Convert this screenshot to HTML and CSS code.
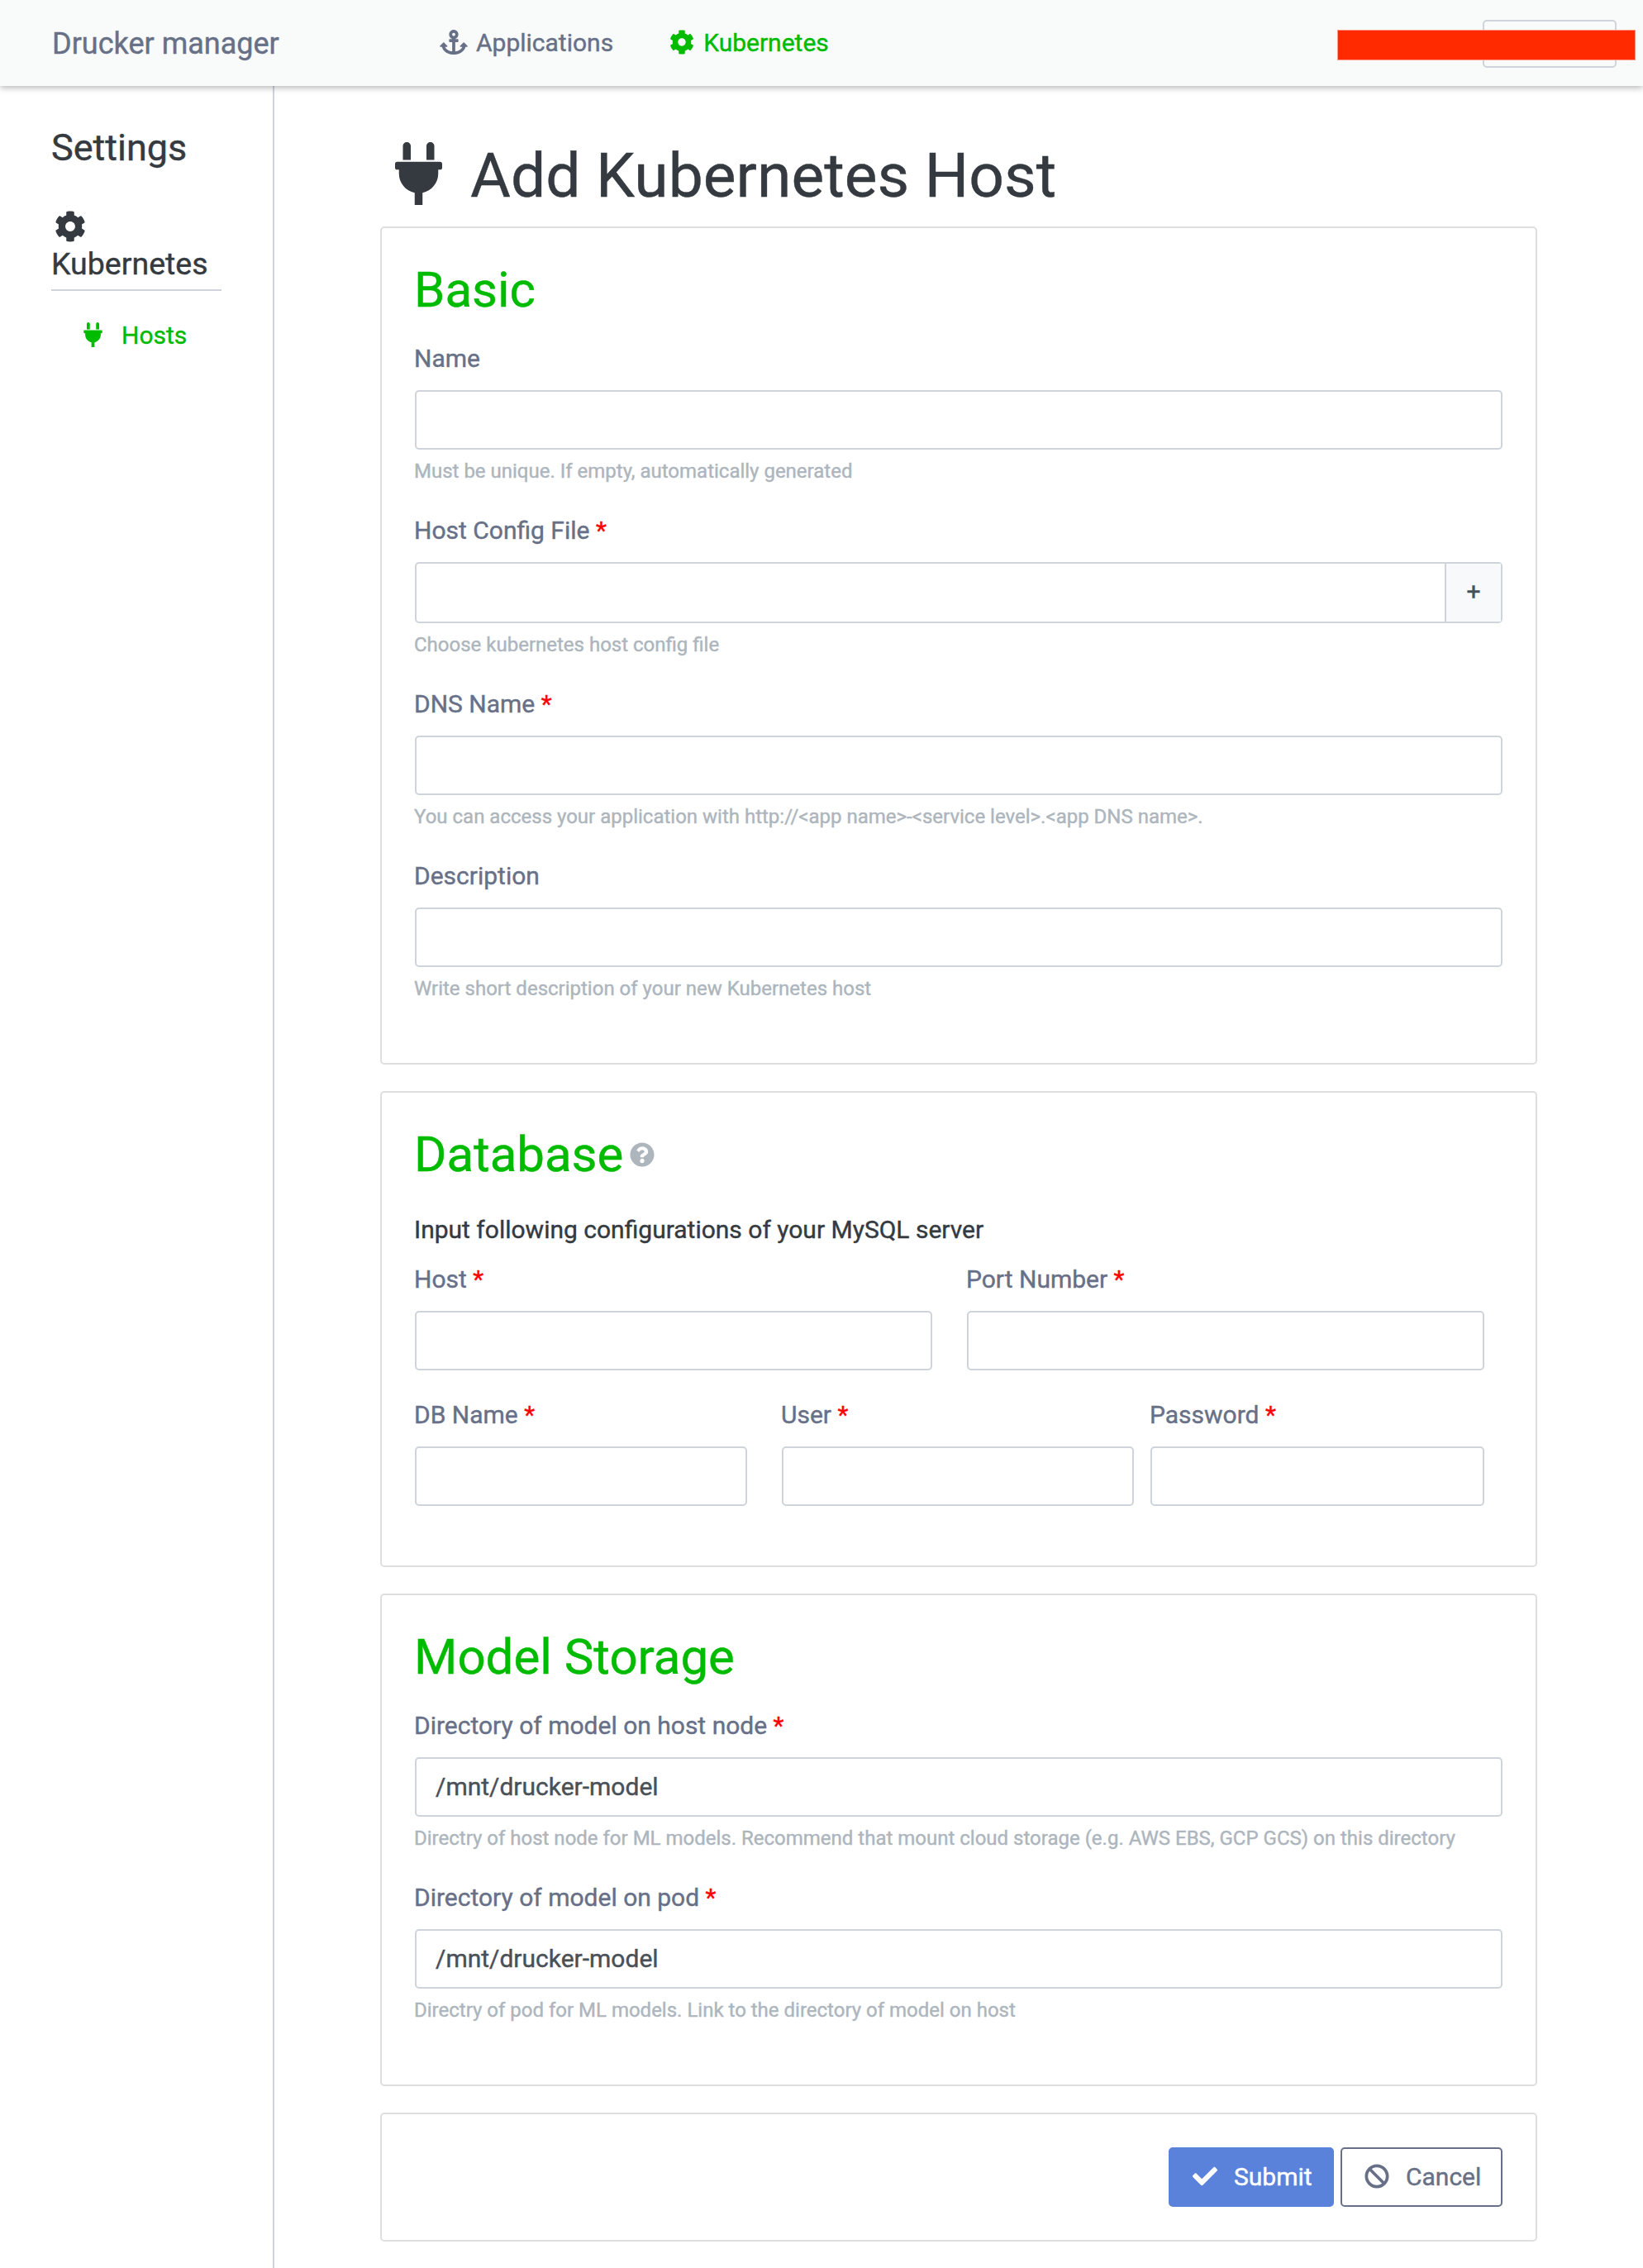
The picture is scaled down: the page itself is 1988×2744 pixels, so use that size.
FILE: index.html
```html
<!DOCTYPE html>
<html lang="en">
<head>
<meta charset="utf-8">
<title>Drucker manager</title>
<link rel="stylesheet" href="styles.css">
</head>
<body>
<svg class="sprite" aria-hidden="true">
  <symbol id="plug" viewBox="0 0 384 512"><path d="M256 144V32c0-17.673 14.327-32 32-32s32 14.327 32 32v112h-64zm112 16H16c-8.837 0-16 7.163-16 16v32c0 8.837 7.163 16 16 16h16v32c0 77.406 54.969 141.971 128 156.796V512h64v-99.204c73.031-14.825 128-79.39 128-156.796v-32h16c8.837 0 16-7.163 16-16v-32c0-8.837-7.163-16-16-16zm-240-16V32c0-17.673-14.327-32-32-32S64 14.327 64 32v112h64z"/></symbol>
  <symbol id="cog" viewBox="0 0 512 512"><path d="M444.788 291.1l42.616 24.599c4.867 2.809 7.126 8.618 5.459 13.985-11.07 35.642-29.97 67.842-54.689 94.586a12.016 12.016 0 0 1-14.832 2.254l-42.584-24.595a191.577 191.577 0 0 1-60.759 35.13v49.182a12.01 12.01 0 0 1-9.377 11.718c-34.956 7.85-72.499 8.256-109.219.007-5.49-1.233-9.403-6.096-9.403-11.723v-49.184a191.555 191.555 0 0 1-60.759-35.13l-42.584 24.595a12.016 12.016 0 0 1-14.832-2.254c-24.718-26.744-43.619-58.944-54.689-94.586-1.667-5.366.592-11.175 5.459-13.985L67.212 291.1a193.48 193.48 0 0 1 0-70.199l-42.616-24.599c-4.867-2.809-7.126-8.618-5.459-13.985 11.07-35.642 29.97-67.842 54.689-94.586a12.016 12.016 0 0 1 14.832-2.254l42.584 24.595a191.577 191.577 0 0 1 60.759-35.13V25.759a12.01 12.01 0 0 1 9.377-11.718c34.956-7.85 72.499-8.256 109.219-.007 5.49 1.233 9.403 6.096 9.403 11.723v49.184a191.555 191.555 0 0 1 60.759 35.13l42.584-24.595a12.016 12.016 0 0 1 14.832 2.254c24.718 26.744 43.619 58.944 54.689 94.586 1.667 5.366-.592 11.175-5.459 13.985L444.788 220.9a193.485 193.485 0 0 1 0 70.2zM336 256c0-44.112-35.888-80-80-80s-80 35.888-80 80 35.888 80 80 80 80-35.888 80-80z"/></symbol>
  <symbol id="anchor" viewBox="0 0 576 512"><path d="M12.971 352h32.394C67.172 454.735 181.944 512 288 512c106.229 0 220.853-57.38 242.635-160h32.394c10.691 0 16.045-12.926 8.485-20.485l-67.029-67.029c-4.686-4.686-12.284-4.686-16.971 0l-67.029 67.029c-7.56 7.56-2.206 20.485 8.485 20.485h35.146c-20.29 54.317-84.963 86.588-144.117 94.015V256h52c6.627 0 12-5.373 12-12v-40c0-6.627-5.373-12-12-12h-52v-5.47c37.281-13.226 63.995-48.725 64-90.5C384.005 43.772 341.605.738 289.37.01 235.723-.739 192 42.525 192 96c0 41.798 26.716 77.312 64 90.53V192h-52c-6.627 0-12 5.373-12 12v40c0 6.627 5.373 12 12 12h52v190.015c-58.936-7.399-123.82-39.679-144.117-94.015h35.146c10.691 0 16.045-12.926 8.485-20.485l-67.029-67.029c-4.686-4.686-12.284-4.686-16.971 0L4.485 331.515C-3.074 339.074 2.28 352 12.971 352zM288 64c17.645 0 32 14.355 32 32s-14.355 32-32 32-32-14.355-32-32 14.355-32 32-32z"/></symbol>
  <symbol id="check" viewBox="0 0 512 512"><path d="M173.898 439.404l-166.4-166.4c-9.997-9.997-9.997-26.206 0-36.204l36.203-36.204c9.997-9.998 26.207-9.998 36.204 0L192 312.69 432.095 72.596c9.997-9.997 26.207-9.997 36.204 0l36.203 36.204c9.997 9.997 9.997 26.206 0 36.204l-294.4 294.401c-9.998 9.997-26.207 9.997-36.204-.001z"/></symbol>
  <symbol id="ban" viewBox="0 0 512 512"><path d="M256 8C119.034 8 8 119.033 8 256s111.034 248 248 248 248-111.034 248-248S392.967 8 256 8zm130.108 117.892c65.448 65.448 70 165.481 20.677 235.637L150.47 105.216c70.204-49.356 170.226-44.735 235.638 20.676zM125.892 386.108c-65.448-65.448-70-165.481-20.677-235.637L361.53 406.784c-70.203 49.356-170.226 44.736-235.638-20.676z"/></symbol>
  <symbol id="question" viewBox="0 0 512 512"><path d="M504 256c0 136.997-111.043 248-248 248S8 392.997 8 256C8 119.083 119.043 8 256 8s248 111.083 248 248zM262.655 90c-54.497 0-89.255 22.957-116.549 63.758-3.536 5.286-2.353 12.415 2.715 16.258l34.699 26.31c5.205 3.947 12.621 3.008 16.665-2.122 17.864-22.658 30.113-35.797 57.303-35.797 20.429 0 45.698 13.148 45.698 32.958 0 14.976-12.363 22.667-32.534 33.976C247.128 238.528 216 254.941 216 296v4c0 6.627 5.373 12 12 12h56c6.627 0 12-5.373 12-12v-1.333c0-28.462 83.186-29.647 83.186-106.667 0-58.002-60.165-102-116.531-102zM256 338c-25.365 0-46 20.635-46 46 0 25.364 20.635 46 46 46s46-20.636 46-46c0-25.365-20.635-46-46-46z"/></symbol>
</svg>

<header class="navbar">
  <a class="brand">Drucker manager</a>
  <nav class="nav">
    <a class="nav-link"><svg class="icon icon-anchor"><use href="#anchor"/></svg>Applications</a>
    <a class="nav-link active"><svg class="icon icon-cog"><use href="#cog"/></svg>Kubernetes</a>
  </nav>
  <div class="user-button"></div>
  <div class="user-mask"></div>
</header>

<div class="layout">
  <aside class="sidebar">
    <h4 class="sidebar-title">Settings</h4>
    <h5 class="sidebar-section"><svg class="icon icon-section"><use href="#cog"/></svg><span>Kubernetes</span></h5>
    <a class="sidebar-link"><svg class="icon icon-plug"><use href="#plug"/></svg>Hosts</a>
  </aside>

  <main class="content">
    <h1 class="page-title"><svg class="icon icon-title"><use href="#plug"/></svg>Add Kubernetes Host</h1>

    <section class="card">
      <h2 class="card-title">Basic</h2>
      <div class="group">
        <label class="label">Name</label>
        <input class="input" type="text">
        <small class="help">Must be unique. If empty, automatically generated</small>
      </div>
      <div class="group">
        <label class="label">Host Config File <span class="required">*</span></label>
        <div class="file"><span class="file-name"></span><span class="file-add">+</span></div>
        <small class="help">Choose kubernetes host config file</small>
      </div>
      <div class="group">
        <label class="label">DNS Name <span class="required">*</span></label>
        <input class="input" type="text">
        <small class="help">You can access your application with http://&lt;app name&gt;-&lt;service level&gt;.&lt;app DNS name&gt;.</small>
      </div>
      <div class="group">
        <label class="label">Description</label>
        <input class="input" type="text">
        <small class="help">Write short description of your new Kubernetes host</small>
      </div>
    </section>

    <section class="card">
      <h2 class="card-title database-title">Database<svg class="icon icon-help"><use href="#question"/></svg></h2>
      <p class="intro">Input following configurations of your MySQL server</p>
      <div class="row row-server">
        <div class="group">
          <label class="label">Host <span class="required">*</span></label>
          <input class="input" type="text">
        </div>
        <div class="group">
          <label class="label">Port Number <span class="required">*</span></label>
          <input class="input" type="text">
        </div>
      </div>
      <div class="row row-account">
        <div class="group group-db">
          <label class="label">DB Name <span class="required">*</span></label>
          <input class="input" type="text">
        </div>
        <div class="group">
          <label class="label">User <span class="required">*</span></label>
          <input class="input" type="text">
        </div>
        <div class="group">
          <label class="label">Password <span class="required">*</span></label>
          <input class="input" type="password">
        </div>
      </div>
    </section>

    <section class="card">
      <h2 class="card-title">Model Storage</h2>
      <div class="group">
        <label class="label">Directory of model on host node <span class="required">*</span></label>
        <input class="input" type="text" value="/mnt/drucker-model">
        <small class="help">Directry of host node for ML models. Recommend that mount cloud storage (e.g. AWS EBS, GCP GCS) on this directory</small>
      </div>
      <div class="group">
        <label class="label">Directory of model on pod <span class="required">*</span></label>
        <input class="input" type="text" value="/mnt/drucker-model">
        <small class="help">Directry of pod for ML models. Link to the directory of model on host</small>
      </div>
    </section>

    <section class="card actions">
      <button class="button submit"><svg class="icon icon-button"><use href="#check"/></svg>Submit</button>
      <button class="button cancel"><svg class="icon icon-button"><use href="#ban"/></svg>Cancel</button>
    </section>
  </main>
</div>
</body>
</html>
```
FILE: styles.css
```css
* {
  box-sizing: border-box;
}

body {
  margin: 0;
  background: #fff;
  color: #343a40;
  font-family: Roboto, "Liberation Sans", sans-serif;
  font-size: 30px;
  line-height: 44px;
  -webkit-text-stroke: .4px;
}

h1, h2, h4, h5, p {
  margin: 0;
  font-weight: 400;
}

.sprite {
  display: none;
}

.icon {
  display: block;
  flex: none;
  fill: currentColor;
}

/* Top bar */
.navbar {
  position: relative;
  display: flex;
  align-items: flex-start;
  height: 104px;
  padding: 24px 32px 0 62px;
  background: #f9fbfa;
  color: #677087;
  box-shadow: 0 2px 8px rgba(0, 0, 0, .3);
}

.brand {
  width: 470px;
  padding: 7px 0 0 1px;
  font-size: 36px;
  line-height: 45px;
}

.nav {
  display: flex;
  gap: 68px;
  padding-top: 6px;
}

.nav-link {
  display: flex;
}

.nav-link.active {
  color: #00bb00;
}

.icon-anchor {
  width: 34px;
  height: 30px;
  margin: 6px 10px 0 0;
}

.icon-cog {
  width: 30px;
  height: 30px;
  margin: 6px 11px 0 0;
}

.user-button {
  width: 162px;
  height: 58px;
  margin-left: auto;
  border: 2px solid #ced4da;
  border-radius: 5px;
}

.user-mask {
  position: absolute;
  top: 36px;
  right: 9px;
  width: 361px;
  height: 37px;
  border: 1px solid #ff9480;
  background: #ff2a00;
}

/* Page columns */
.layout {
  display: flex;
  min-height: 2640px;
}

.sidebar {
  width: 332px;
  padding: 48px 62px 0;
  border-right: 2px solid #ced4da;
}

.sidebar-title {
  font-size: 45px;
  line-height: 54px;
}

.sidebar-section {
  margin-top: 49px;
  padding-bottom: 8px;
  border-bottom: 2px solid #ced4da;
  font-size: 37.5px;
  line-height: 45px;
}

.icon-section {
  width: 38px;
  height: 38px;
  margin: 0 0 4px 4px;
}

.sidebar-link {
  display: flex;
  margin: 32px 0 0 39px;
  color: #00bb00;
}

.icon-plug {
  width: 23px;
  height: 30px;
  margin: 6px 23px 0 0;
}

.content {
  width: 1400px;
  margin-left: 128px;
  padding-top: 63px;
}

.page-title {
  display: flex;
  margin-bottom: 17px;
  font-size: 75px;
  line-height: 90px;
}

.icon-title {
  width: 57px;
  height: 76px;
  margin: 5px 34px 0 18px;
}

/* Cards and form fields */
.card {
  margin-bottom: 32px;
  padding: 40px;
  border: 2px solid #dfdfdf;
  border-radius: 5px;
}

.card-title {
  margin-bottom: 26px;
  color: #00bb00;
  font-size: 60px;
  line-height: 70px;
  text-indent: -1px;
}

.database-title {
  display: flex;
  margin-bottom: 34px;
}

.icon-help {
  width: 30px;
  height: 30px;
  margin: 20px 0 0 8px;
  color: #adb5bd;
}

.intro {
  margin-bottom: 16px;
  text-indent: -1px;
}

.group {
  margin-bottom: 32px;
}

.label {
  display: block;
  margin-bottom: 16px;
  color: #677087;
  text-indent: -1px;
}

.required {
  color: #f00;
}

.input {
  display: block;
  width: 100%;
  height: 72px;
  padding: 0 23px 2px;
  border: 2px solid #ced4da;
  border-radius: 5px;
  background: #fff;
  color: #495057;
  font: inherit;
  -webkit-text-stroke: .4px;
}

.help {
  display: block;
  margin-top: 8px;
  color: #adb5bd;
  font-size: 24px;
  line-height: 36px;
  text-indent: -1px;
}

.file {
  display: flex;
  height: 74px;
  border: 2px solid #ced4da;
  border-radius: 5px;
}

.file-name {
  flex: 1;
}

.file-add {
  width: 68px;
  border-left: 2px solid #ced4da;
  background: #f8f9fb;
  color: #495057;
  line-height: 68px;
  text-align: center;
}

.row {
  display: grid;
}

.row-server {
  grid-template-columns: 626px 626px;
  column-gap: 42px;
}

.row-account {
  grid-template-columns: 424px 426px 404px;
  column-gap: 20px;
}

.group-db {
  margin-right: 22px;
}

/* Form actions */
.actions {
  display: flex;
  justify-content: flex-end;
  gap: 8px;
}

.button {
  display: flex;
  align-items: center;
  height: 72px;
  padding: 0 0 0 27px;
  border: 2px solid;
  border-radius: 5px;
  font: inherit;
  -webkit-text-stroke: .4px;
}

.icon-button {
  width: 30px;
  height: 30px;
  margin: -3px 20px 0 0;
}

.submit {
  width: 200px;
  border-color: #5b82db;
  background: #5b82db;
  color: #fff;
}

.cancel {
  width: 196px;
  border-color: #677087;
  background: #fff;
  color: #677087;
}
```
